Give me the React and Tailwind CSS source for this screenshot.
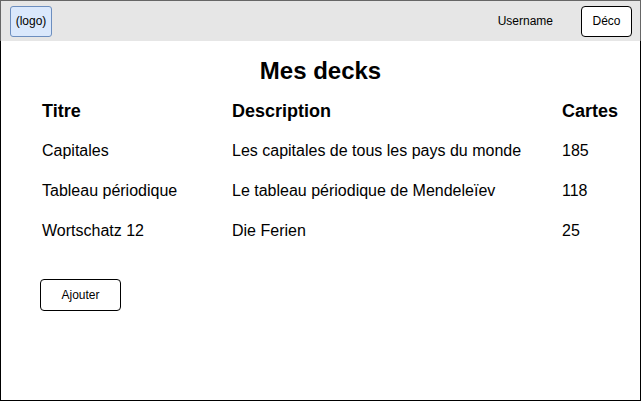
const decks = [
  { title: 'Capitales', description: 'Les capitales de tous les pays du monde', cards: 185 },
  { title: 'Tableau périodique', description: 'Le tableau périodique de Mendeleïev', cards: 118 },
  { title: 'Wortschatz 12', description: 'Die Ferien', cards: 25 },
];

export default function App() {
  return (
    <div
      className="w-[641px] h-[401px] flex flex-col bg-white text-black"
      style={{ fontFamily: '"Liberation Sans", Arial, sans-serif' }}
    >
      {/* top bar */}
      <header className="h-[41px] shrink-0 flex items-center bg-[#e6e6e6] border-t border-l border-r border-[#666666] pl-[9px] pr-[8px]">
        <div className="w-[42px] h-[31px] flex items-center justify-center bg-[#dae8fc] border border-[#6c8ebf] rounded-[3px] text-[12px]">
          (logo)
        </div>
        <div className="flex-1" />
        <span className="text-[12px] mr-[28px]">Username</span>
        <button className="w-[51px] h-[31px] flex items-center justify-center bg-white border border-black rounded-[4px] text-[12px]">
          Déco
        </button>
      </header>

      {/* content */}
      <main className="flex-1 border-l border-r border-b border-black pl-[41px] pt-[15px]">
        <h1 className="h-[30px] flex items-center justify-center text-[24px] font-bold -ml-[41px]">
          Mes decks
        </h1>
        <div className="mt-[5px] grid grid-cols-[190px_330px_1fr]">
          <div className="h-10 flex items-center text-[18px] font-bold">Titre</div>
          <div className="h-10 flex items-center text-[18px] font-bold">Description</div>
          <div className="h-10 flex items-center text-[18px] font-bold">Cartes</div>
          {decks.map((d) => (
            <div key={d.title} className="contents">
              <div className="h-10 flex items-center text-[16px]">{d.title}</div>
              <div className="h-10 flex items-center text-[16px]">{d.description}</div>
              <div className="h-10 flex items-center text-[16px]">{d.cards}</div>
            </div>
          ))}
        </div>
        <button className="mt-[28px] -ml-[2px] w-[81px] h-[32px] flex items-center justify-center border border-black rounded-[4px] text-[12px]">
          Ajouter
        </button>
      </main>
    </div>
  );
}
